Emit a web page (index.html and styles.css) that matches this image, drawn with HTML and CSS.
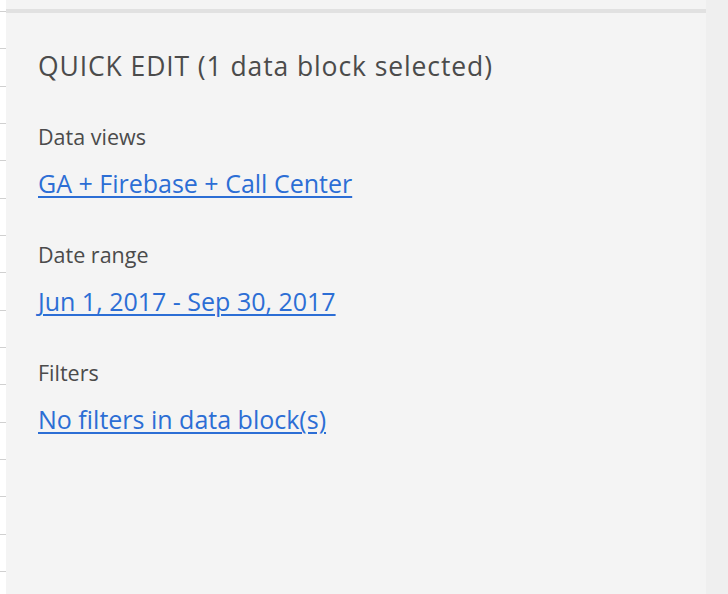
FILE: index.html
```html
<!DOCTYPE html>
<html>
<head>
<meta charset="utf-8">
<link rel="stylesheet" href="styles.css">
</head>
<body>
<div class="page">
  <div class="ruler"></div>
  <div class="panel">
    <div class="panel-body">
      <h2 class="title">QUICK EDIT (1 data block selected)</h2>
      <div class="field">
        <div class="label">Data views</div>
        <a class="link" href="#">GA + Firebase + Call Center</a>
      </div>
      <div class="field">
        <div class="label">Date range</div>
        <a class="link" href="#">Jun 1, 2017 - Sep 30, 2017</a>
      </div>
      <div class="field">
        <div class="label">Filters</div>
        <a class="link" href="#">No filters in data block(s)</a>
      </div>
    </div>
  </div>
  <div class="gutter"></div>
</div>
</body>
</html>
```

FILE: styles.css
```css
html, body {
  margin: 0;
  padding: 0;
  height: 100%;
}
body {
  font-family: "Open Sans", "Liberation Sans", sans-serif;
  background: #f4f4f4;
}
.page {
  display: flex;
  height: 594px;
}
.ruler {
  width: 6px;
  background-color: #ffffff;
  background-image: repeating-linear-gradient(to bottom, #d0d0d0 0, #d0d0d0 1px, transparent 1px, transparent 37.33px);
  background-position: 0 11px;
}
.panel {
  width: 700px;
  background: #f4f4f4;
  padding-top: 9px;
  box-sizing: border-box;
}
.panel-body {
  border-top: 4px solid #e1e1e1;
  padding: 0 0 0 32px;
}
.gutter {
  flex: 1;
  background: #efefef;
}
.title {
  margin: 37px 0 0 0;
  font-size: 26.5px;
  font-weight: 400;
  line-height: 32px;
  letter-spacing: 0.9px;
  color: #4b4b4b;
}
.field {
  display: flex;
  flex-direction: column;
  align-items: flex-start;
  margin-top: 42px;
}
.field + .field {
  margin-top: 44px;
}
.label {
  font-size: 21.5px;
  line-height: 26px;
  color: #4b4b4b;
}
.link {
  margin-top: 18px;
  font-size: 25px;
  line-height: 30px;
  color: #2c6ed5;
  text-decoration: underline;
  text-underline-offset: 3px;
  text-decoration-thickness: 2px;
}
```
